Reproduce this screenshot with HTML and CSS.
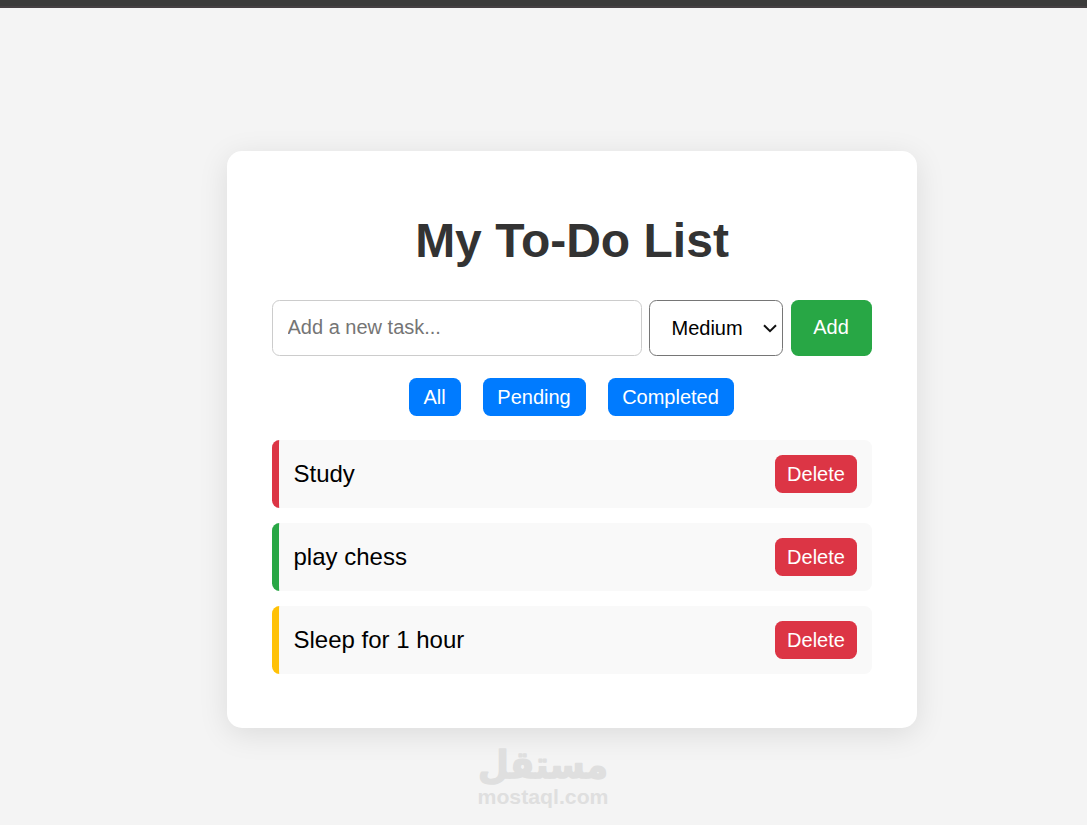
FILE: index.html
```html
<!DOCTYPE html>
<html lang="en">
<head>
<meta charset="UTF-8">
<title>My To-Do List</title>
<link rel="stylesheet" href="styles.css">
</head>
<body>
<div class="topbar"></div>
<main class="card">
  <h1 class="title">My To-Do List</h1>
  <form class="task-form">
    <input class="task-input" type="text" placeholder="Add a new task...">
    <div class="priority">
      <span>Medium</span>
      <svg class="chevron" viewBox="0 0 14 9"><path d="M1 1.2 7 7.2 13 1.2"/></svg>
    </div>
    <button class="btn add" type="button">Add</button>
  </form>
  <div class="filters">
    <button class="btn filter all" type="button">All</button>
    <button class="btn filter pending" type="button">Pending</button>
    <button class="btn filter completed" type="button">Completed</button>
  </div>
  <ul class="tasks">
    <li class="task high"><span>Study</span><button class="btn delete" type="button">Delete</button></li>
    <li class="task low"><span>play chess</span><button class="btn delete" type="button">Delete</button></li>
    <li class="task medium"><span>Sleep for 1 hour</span><button class="btn delete" type="button">Delete</button></li>
  </ul>
</main>
<svg class="watermark" viewBox="0 0 136 80">
  <text class="mark-ar" x="3" y="49" textLength="130" lengthAdjust="spacingAndGlyphs">مستقل</text>
  <text class="mark-en" x="2.5" y="75" textLength="131" lengthAdjust="spacingAndGlyphs">mostaql.com</text>
</svg>
</body>
</html>
```
FILE: styles.css
```css
* { box-sizing: border-box; }
body {
  margin: 0;
  height: 825px;
  overflow: hidden;
  background: #f4f4f4;
  font-family: Arial, "Liberation Sans", sans-serif;
}
.topbar {
  height: 8px;
  background: #3b3b3b;
  border-bottom: 2px solid #454043;
}
.card {
  width: 690px;
  height: 577px;
  margin: 143px 0 0 227px;
  padding: 62px 45px 45px;
  background: #fff;
  border-radius: 15px;
  box-shadow: 0 6px 30px rgba(0, 0, 0, .1);
}
.title {
  margin: 0 0 31px;
  font-size: 48px;
  line-height: 56px;
  text-align: center;
  color: #333;
}
.task-form { display: flex; height: 56px; }
.task-input {
  width: 370px;
  padding: 0 14.5px 2px;
  border: 1px solid #ccc;
  border-radius: 7.5px;
  font: 20px Arial, "Liberation Sans", sans-serif;
}
.task-input::placeholder { color: #757575; }
.priority {
  display: flex;
  align-items: center;
  justify-content: space-between;
  width: 134px;
  margin: 0 8px 0 7px;
  padding: 0 5px 0 21.5px;
  border: 1px solid #767676;
  border-radius: 7.5px;
  font-size: 20px;
  color: #000;
}
.chevron {
  width: 14px;
  height: 9px;
  fill: none;
  stroke: #111;
  stroke-width: 2;
}
.btn {
  padding: 0;
  border: 0;
  border-radius: 7.5px;
  color: #fff;
  font: 20px/24px Arial, "Liberation Sans", sans-serif;
}
.add { width: 81px; padding: 0 1px 2px 0; background: #28a745; }
.filters {
  display: flex;
  gap: 22px;
  margin: 22px 0 24px;
  padding-left: 137px;
}
.filter { height: 38px; padding-right: 1px; background: #007bff; }
.all { width: 52px; }
.pending { width: 103px; }
.completed { width: 126px; }
.tasks {
  display: grid;
  gap: 15px;
  margin: 0;
  padding: 0;
  list-style: none;
}
.task {
  display: flex;
  align-items: center;
  justify-content: space-between;
  height: 68px;
  padding: 0 15px 0 14.5px;
  border-left: 7px solid;
  border-radius: 7.5px;
  background: #f9f9f9;
  font-size: 24px;
}
.task span { color: #000; }
.high { border-color: #dc3545; }
.low { border-color: #28a745; }
.medium { border-color: #ffc107; }
.delete { width: 82px; height: 38px; background: #dc3545; }
.watermark {
  display: block;
  width: 136px;
  height: 80px;
  margin: 1px 0 0 475px;
  fill: #dfdfdf;
}
.mark-ar {
  font: bold 38px "DejaVu Sans", sans-serif;
  stroke: #dfdfdf;
  stroke-width: 1.5;
  stroke-linejoin: round;
}
.mark-en { font: bold 21px Arial, "Liberation Sans", sans-serif; }
```
